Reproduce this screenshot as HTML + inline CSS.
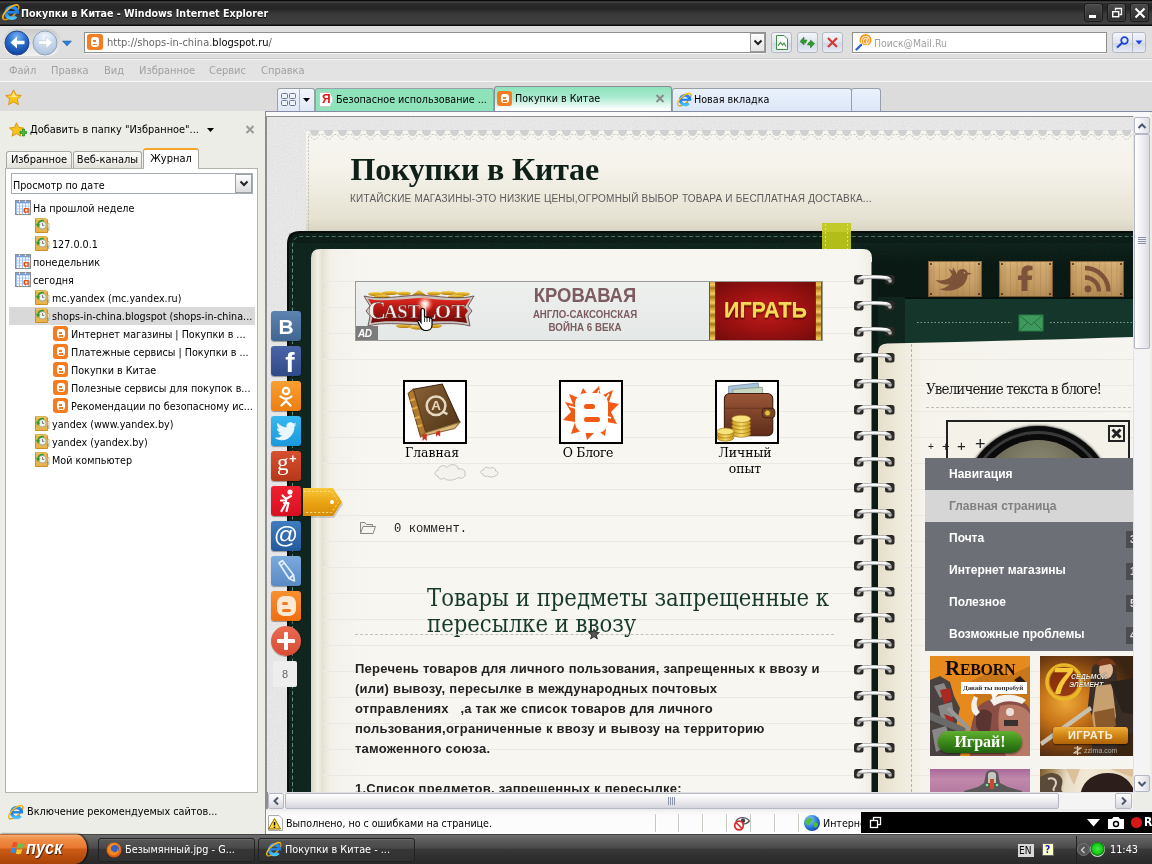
<!DOCTYPE html>
<html lang="ru">
<head>
<meta charset="utf-8">
<title>Покупки в Китае - Windows Internet Explorer</title>
<style>
html,body{margin:0;padding:0;}
body{width:1152px;height:864px;overflow:hidden;position:relative;background:#edede8;font-family:"DejaVu Sans Condensed","DejaVu Sans","Liberation Sans",sans-serif;font-size:11px;color:#000;}
.a{position:absolute;}
.t{position:absolute;white-space:nowrap;line-height:14px;}
/* ---------- window chrome ---------- */
#titlebar{left:0;top:0;width:1152px;height:26px;background:linear-gradient(#0a0a0a 0,#0a0a0a 1px,#5a5a5a 2px,#2b2b2b 3px,#262626 9px,#3a3a3a 14px,#404040 24px,#0c0c0c 25px,#0c0c0c 26px);}
#navbar{left:0;top:26px;width:1152px;height:33px;background:#dfdfdf;border-bottom:1px solid #c9c9c9;box-sizing:border-box;}
#menubar{left:0;top:59px;width:1152px;height:23px;background:#e3e3e3;border-top:1px solid #f4f4f4;border-bottom:1px solid #f6f6f6;box-sizing:border-box;}
#favbar{left:0;top:82px;width:1152px;height:29px;background:#dcdcdc;}
#sidebar{left:0;top:111px;width:265px;height:723px;background:#edede8;}
#statusbar{left:266px;top:809px;width:886px;height:25px;background:linear-gradient(#e9e9e9 0,#f6f6f6 3px,#fcfcfc 8px,#fdfdfd);}
#taskbar{left:0;top:834px;width:1152px;height:30px;background:linear-gradient(#1e1e1e 0,#6c6c6c 1px,#5e5e5e 6px,#4a4a4a 14px,#3a3a3a 15px,#2e2e2e 24px,#282828 30px);}

/* title */
#ttl{left:21px;top:6px;color:#fff;font-weight:bold;font-size:10.6px;text-shadow:0 1px 1px #000;}
.wb{top:3px;width:19px;height:19px;border-radius:3px;background:linear-gradient(#4a4a4a,#2e2e2e);border:1px solid #1a1a1a;box-sizing:border-box;box-shadow:inset 0 0 0 1px rgba(255,255,255,.07);}
/* nav */
.nbtn{border:1px solid #b4b9c2;border-radius:3px;background:linear-gradient(#f4f6fb,#dfe4ee 50%,#d0d7e6 51%,#e6eaf3);box-sizing:border-box;}
#addr{left:84px;top:32px;width:682px;height:21px;background:#fff;border:1px solid #8e8f8f;box-sizing:border-box;box-shadow:0 1px 0 #f6f6f6;}
#srch{left:852px;top:32px;width:255px;height:21px;background:#fff;border:1px solid #8e8f8f;box-sizing:border-box;box-shadow:0 1px 0 #f6f6f6;}
.menu{top:64px;color:#a2a2a2;font-size:11px;}
/* tabs */
.tab{top:88px;height:23px;box-sizing:border-box;border:1px solid #9aa0a8;border-bottom:none;border-radius:3px 3px 0 0;}

/* sidebar */
.stab{top:151px;height:18px;box-sizing:border-box;border:1px solid #a9a9a4;border-bottom:none;border-radius:3px 3px 0 0;background:linear-gradient(#fbfbf9,#eeede8 60%,#dcdbd4);text-align:center;line-height:16px;font-size:11px;white-space:nowrap;}
#spanel{left:5px;top:168px;width:253px;height:625px;background:#fff;border:1px solid #b5b5b0;box-sizing:border-box;}
.tr{position:absolute;white-space:nowrap;font-size:10.700px;line-height:18px;height:18px;margin-top:2px;}
.cal{position:absolute;width:16px;height:15px;box-sizing:border-box;border:1px solid #8a9bb8;background:
 linear-gradient(#c8d6ee,#c8d6ee) 0 0/100% 3px no-repeat,
 repeating-linear-gradient(90deg,transparent 0,transparent 3px,#b9c9e6 3px,#b9c9e6 4px),
 repeating-linear-gradient(0deg,#fff 0,#fff 3px,#b9c9e6 3px,#b9c9e6 4px);}
.cal:after{content:"";position:absolute;left:8px;top:7px;width:4px;height:4px;border:1.500px solid #e8501a;background:#fff;box-sizing:content-box;}
.hist{position:absolute;width:14px;height:15px;box-sizing:border-box;border:1px solid #c9a54a;border-radius:2px;background:linear-gradient(135deg,#f6e3a0,#e7c565);}
.hist:before{content:"";position:absolute;left:2px;top:2px;width:8px;height:8px;border-radius:50%;background:#fff;border:1px solid #7d8a7a;box-sizing:border-box;}
.hist:after{content:"";position:absolute;left:0px;top:4px;width:0;height:0;border:3px solid transparent;border-right-color:#2f9e3a;border-left:none;}
.blg{position:absolute;width:15px;height:15px;border-radius:3px;background:#f57d20;}
.blg:before{content:"";position:absolute;left:4px;top:3px;width:8px;height:9px;border-radius:3px;background:#fff;}
.blg:after{content:"";position:absolute;left:6px;top:6px;width:3px;height:1.500px;background:#f57d20;box-shadow:0 3px 0 #f57d20,1px 3px 0 #f57d20;}

/* status + taskbar */
.sdiv{top:814px;width:1px;height:18px;background:#c9c9c4;border-right:1px solid #fff;}
.tbtn{top:838px;height:24px;box-sizing:border-box;border:1px solid #222;border-radius:3px;background:linear-gradient(#585858,#484848 42%,#363636 46%,#303030);box-shadow:inset 0 1px 0 rgba(255,255,255,.1);}

/* web page */
#pg{left:-267px;top:-117px;width:1152px;height:864px;}
#pg .t{line-height:1;}
.ser{font-family:"DejaVu Serif Condensed","DejaVu Serif","Liberation Serif",serif;}
.soc{left:271px;width:30px;height:30px;border-radius:3px;box-shadow:0 1px 1px rgba(0,0,0,.35);}
.ibox{top:380px;width:64px;height:64px;box-sizing:border-box;border:2px solid #000;background:#fff;}
.nav{left:925px;width:230px;height:32px;background:#6d6f76;color:#fff;font:bold 12px/32px "Liberation Sans",sans-serif;padding-left:24px;box-sizing:border-box;white-space:nowrap;}
.badge{left:1126px;width:20px;height:17px;background:#4a4c52;color:#ddd;font:bold 11px/17px "Liberation Sans",sans-serif;padding-left:4px;box-sizing:border-box;}
.bt{font-family:"Liberation Sans",sans-serif;font-weight:bold;font-size:13px;letter-spacing:.25px;color:#222;}
.sbtn{box-sizing:border-box;border:1px solid #b4b8c4;border-radius:2px;background:linear-gradient(90deg,#fff,#f0f0f4 50%,#dcdce4);}
/* ---------- page ---------- */
#frame{left:265px;top:111px;width:887px;height:723px;background:#fafafa;border-left:1px solid #868ca4;border-top:1px solid #868ca4;box-sizing:border-box;}
#frame2{left:266px;top:116px;width:886px;height:693px;background:#8e8e8e;}
#view{left:267px;top:117px;width:866px;height:675px;overflow:hidden;background:#e4e4e4;}
</style>
</head>
<body>
<div id="root" style="position:absolute;left:0;top:0;width:1152px;height:864px;will-change:transform">

<svg width="0" height="0" style="position:absolute"><defs><linearGradient id="ieg" x1="0" y1="0" x2="0" y2="1"><stop offset="0" stop-color="#2a8cf0"/><stop offset=".5" stop-color="#1a78e0"/><stop offset="1" stop-color="#4cc4ff"/></linearGradient><symbol id="cal" viewBox="0 0 16 15"><rect x=".5" y=".5" width="15" height="14" fill="#9cc2f2" stroke="#8e8e8e"/><rect x="1" y="1" width="14" height="2" fill="#7f9fd0"/><path d="M4.500 .5V2M10.500 .5V2" stroke="#fff" stroke-width="1"/><g fill="#fff"><rect x="2" y="3.600" width="2" height="2"/><rect x="5" y="3.600" width="2" height="2"/><rect x="8" y="3.600" width="2" height="2"/><rect x="11" y="3.600" width="2" height="2"/><rect x="2" y="6.500" width="2" height="2"/><rect x="5" y="6.500" width="2" height="2"/><rect x="8" y="6.500" width="2" height="2"/><rect x="11" y="6.500" width="2" height="2"/><rect x="2" y="9.400" width="2" height="2"/><rect x="5" y="9.400" width="2" height="2"/><rect x="2" y="12.200" width="2" height="1.800"/><rect x="5" y="12.200" width="2" height="1.800"/><rect x="8" y="12.200" width="2" height="1.800"/><rect x="11" y="12.200" width="2" height="1.800"/><rect x="13.600" y="3.600" width="1.400" height="2"/><rect x="13.600" y="6.500" width="1.400" height="2"/></g><rect x="9.600" y="8.700" width="3.400" height="3.400" fill="#fff" stroke="#f04a00" stroke-width="1.300"/></symbol>
<symbol id="hist" viewBox="0 0 15 16"><path d="M.5 1.500H11L12.500 3V15.500H.5Z" fill="#e6b44a" stroke="#c8902a" stroke-width="1"/><path d="M12.500 6.500H14V13.500H12.500Z" fill="#fff" stroke="#c8902a" stroke-width=".6"/><path d="M12.900 10.500V13" stroke="#2a8ae8" stroke-width=".9"/><path d="M1 2H11" stroke="#f6d888" stroke-width="1"/><circle cx="7.400" cy="8.200" r="3.700" fill="#f4f4f4" stroke="#9aa09a" stroke-width=".8"/><path d="M7.400 6V8.400H9.300" fill="none" stroke="#555" stroke-width=".8"/><path d="M3 9C2.300 5.500 5.500 2.800 8.800 3.600" fill="none" stroke="#2e9e2e" stroke-width="1.600"/><path d="M.8 6.800L5.400 7.400L3 10.800Z" fill="#2e9e2e"/></symbol>
<symbol id="ie" viewBox="0 0 20 20"><g transform="translate(9.800,10.200) rotate(-42)"><path d="M-10 0A10 4.200 0 0 0 10 0" fill="none" stroke="#d89a10" stroke-width="1.500"/></g><path d="M16.300 10.300A5.600 5.600 0 1 0 15 14.300" fill="none" stroke="url(#ieg)" stroke-width="3.600"/><path d="M6.500 10.300H17.800" stroke="#1f84ea" stroke-width="2.600"/><g transform="translate(9.800,10.200) rotate(-42)"><path d="M-10 0A10 4.200 0 0 1 10 0" fill="none" stroke="#f4b81c" stroke-width="1.700"/></g></symbol></defs></svg>
<div class="a" id="titlebar"></div>
<svg class="a" style="left:1px;top:2px" width="20" height="20"><use href="#ie"/></svg>
<div class="t" id="ttl">Покупки в Китае - Windows Internet Explorer</div>
<div class="a wb" style="left:1084px"><div class="a" style="left:4px;top:11px;width:7px;height:3px;background:#fff"></div></div>
<div class="a wb" style="left:1107px"><svg class="a" style="left:3px;top:3px" width="12" height="12"><path d="M4.5 3.5V1.5H10.5V7.5H8.5" fill="none" stroke="#fff" stroke-width="1.3"/><rect x="1.7" y="4.7" width="6" height="5" fill="none" stroke="#fff" stroke-width="1.4"/></svg></div>
<div class="a wb" style="left:1130px"><svg class="a" style="left:3px;top:3px" width="12" height="12"><path d="M1.5 1.5L10.5 10.5M10.5 1.5L1.5 10.5" stroke="#fff" stroke-width="2"/></svg></div>

<div class="a" id="navbar"></div>
<div class="a" style="left:3px;top:29px;width:58px;height:27px;border-radius:14px;background:linear-gradient(#c8c8c8,#f4f4f4);opacity:.9"></div>
<svg class="a" style="left:4px;top:30px" width="70" height="26" viewBox="0 0 70 26">
<defs><radialGradient id="gb" cx=".5" cy=".25" r=".8"><stop offset="0" stop-color="#7fb6f2"/><stop offset=".45" stop-color="#2a6ed0"/><stop offset="1" stop-color="#0d3c93"/></radialGradient>
<radialGradient id="gf" cx=".5" cy=".25" r=".8"><stop offset="0" stop-color="#f4f8fd"/><stop offset=".5" stop-color="#c9d8ec"/><stop offset="1" stop-color="#a9bdd8"/></radialGradient></defs>
<circle cx="13" cy="13" r="12" fill="url(#gb)" stroke="#27488a" stroke-width="1"/>
<path d="M6.500 12.500L13 6.500V10.700H20.500V14.300H13V18.500Z" fill="#fff"/>
<circle cx="41" cy="13" r="12" fill="url(#gf)" stroke="#8fa3c0" stroke-width="1"/>
<path d="M48.500 12.500L42 6.500V10.700H34.500V14.300H42V18.500Z" fill="#fff" stroke="#b8c8de" stroke-width=".6"/>
<path d="M58.5 11H67.5L63 16Z" fill="#2c7fd6" stroke="#1a5aa8" stroke-width=".5"/>
</svg>
<div class="a" id="addr"></div>
<div class="a" style="left:87px;top:34px;width:16px;height:16px;border-radius:3px;background:#f57d20"></div>
<div class="a" style="left:91px;top:37px;width:8px;height:10px;border-radius:3px;background:#fff"></div>
<div class="a" style="left:93px;top:40px;width:3px;height:1.5px;background:#f57d20"></div>
<div class="a" style="left:93px;top:43.5px;width:4px;height:1.5px;background:#f57d20"></div>
<div class="t" style="left:107px;top:36px;font-size:11px;color:#666">http://shops-in-china.<span style="color:#000">blogspot.ru</span>/</div>
<div class="a" style="left:750px;top:33px;width:15px;height:19px;background:linear-gradient(#fdfdfd,#e4e4e4);border:1px solid #9b9b9b;box-sizing:border-box"></div>
<svg class="a" style="left:753px;top:39px" width="10" height="8"><path d="M1.5 1.5L5 5L8.5 1.5" fill="none" stroke="#222" stroke-width="2"/></svg>
<div class="a nbtn" style="left:771px;top:32px;width:21px;height:21px"></div>
<svg class="a" style="left:775px;top:35px" width="14" height="15"><path d="M1.5 .5H9L12.5 4V14.5H1.5Z" fill="#fff" stroke="#3d9140" stroke-width="1"/><path d="M3 11L5.5 7.5L7.5 10L9 8L11 11.5" fill="none" stroke="#3d9140" stroke-width="1.2"/></svg>
<div class="a nbtn" style="left:797px;top:32px;width:21px;height:21px"></div>
<svg class="a" style="left:799px;top:35px" width="17" height="15"><path d="M1 6.5L5 2V5H8L6.5 8H5V10Z M15.5 8.5L11.5 13V10H8.500L10 7H11.500V5Z" fill="#2e9b2e" stroke="#1c6f1c" stroke-width=".5"/></svg>
<div class="a nbtn" style="left:822px;top:32px;width:21px;height:21px"></div>
<svg class="a" style="left:826px;top:36px" width="13" height="13"><path d="M2 2L11 11M11 2L2 11" stroke="#d23a34" stroke-width="2.2"/></svg>
<div class="a" id="srch"></div>
<svg class="a" style="left:855px;top:33px" width="18" height="18"><circle cx="10.500" cy="7" r="6" fill="#f79a1e"/><text x="5.500" y="10.500" font-family="Liberation Sans, sans-serif" font-weight="bold" font-size="10" fill="#fff">@</text><path d="M1.5 16.5L6 12" stroke="#2a64c8" stroke-width="2.4" stroke-linecap="round"/></svg>
<div class="t" style="left:874px;top:36px;font-size:10.4px;color:#a0a0a0">Поиск@Mail.Ru</div>
<div class="a nbtn" style="left:1112px;top:32px;width:34px;height:21px"></div>
<div class="a" style="left:1132px;top:33px;width:1px;height:19px;background:#b4b9c2"></div>
<svg class="a" style="left:1114px;top:35px" width="17" height="15"><circle cx="10.500" cy="5.500" r="3.300" fill="none" stroke="#1c44d8" stroke-width="1.700"/><path d="M8 8L3 12.500" stroke="#1c44d8" stroke-width="2.200"/></svg>
<svg class="a" style="left:1135px;top:40px" width="8" height="5"><path d="M.5 .5H7.5L4 4.500Z" fill="#1c44d8"/></svg>

<div class="a" id="menubar"></div>
<div class="t menu" style="left:9px">Файл</div>
<div class="t menu" style="left:51px">Правка</div>
<div class="t menu" style="left:104px">Вид</div>
<div class="t menu" style="left:139px">Избранное</div>
<div class="t menu" style="left:209px">Сервис</div>
<div class="t menu" style="left:261px">Справка</div>

<div class="a" id="favbar"></div>
<svg class="a" style="left:5px;top:89px" width="17" height="17" viewBox="0 0 17 17"><path d="M8.500 .8L10.900 5.900L16.300 6.500L12.300 10.200L13.400 15.700L8.500 12.900L3.600 15.700L4.700 10.200L.7 6.500L6.100 5.900Z" fill="#f9c31c" stroke="#d89208" stroke-width=".9"/><path d="M8.500 3L10 6.800L13.500 7.300L8.500 8.500L4 7.200L7 6.800Z" fill="#fde98a"/></svg>


<div class="a tab" style="left:277px;width:38px;background:linear-gradient(#f2f6fc,#dfe8f6)"></div>
<div class="a" style="left:299px;top:89px;width:1px;height:22px;background:#aab2bf"></div>
<svg class="a" style="left:280px;top:92px" width="17" height="15"><g fill="#eef2fa" stroke="#6c7890" stroke-width="1"><rect x="1.500" y="1.500" width="6" height="5" rx="1"/><rect x="9.500" y="1.500" width="6" height="5" rx="1"/><rect x="1.500" y="8.500" width="6" height="5" rx="1"/><rect x="9.500" y="8.500" width="6" height="5" rx="1"/></g></svg>
<svg class="a" style="left:303px;top:98px" width="7" height="4"><path d="M0 0H7L3.500 4Z" fill="#000"/></svg>
<div class="a tab" style="left:315px;width:179px;background:#8fe3bb"></div>
<div class="a" style="left:319px;top:92px;width:14px;height:15px;background:#fff;border:1px solid #c8c8c8;box-sizing:border-box;clip-path:polygon(0 0,75% 0,100% 50%,75% 100%,0 100%)"></div>
<div class="t" style="left:322px;top:92px;font:bold 12px/15px 'Liberation Sans',sans-serif;color:#e01818">Я</div>
<div class="t" style="left:336px;top:93px;font-size:10.700px">Безопасное использование ...</div>
<div class="a tab" style="left:494px;top:86px;width:178px;height:26px;background:linear-gradient(#8fe3bb 0,#a8ead0 40%,#fff 90%);border-color:#8a9098"></div>
<div class="blg" style="left:497px;top:91px"></div>
<div class="t" style="left:515px;top:92px;font-size:10.700px">Покупки в Китае</div>
<svg class="a" style="left:655px;top:94px" width="10" height="9"><path d="M1.500 1L8.500 8M8.500 1L1.500 8" stroke="#8a8a8a" stroke-width="2"/></svg>
<div class="a tab" style="left:672px;width:180px;background:linear-gradient(#eaf1fc,#dce7f7)"></div>
<svg class="a" style="left:676px;top:91px" width="17" height="17"><use href="#ie"/></svg>
<div class="t" style="left:694px;top:93px;font-size:10.700px">Новая вкладка</div>
<div class="a tab" style="left:851px;width:30px;background:linear-gradient(#eaf1fc,#dce7f7)"></div>
<div class="a" id="sidebar"></div>
<svg class="a" style="left:9px;top:122px" width="18" height="17" viewBox="0 0 18 17"><path d="M7.500 .8L9.600 5.400L14.500 6L10.900 9.300L11.900 14.200L7.500 11.700L3.100 14.200L4.100 9.300L.5 6L5.400 5.400Z" fill="#f9c31c" stroke="#d89208" stroke-width=".9"/><path d="M11 9.500H13.500V7H15.500V9.500H17.700V11.500H15.500V14H13.500V11.500H11Z" fill="#3cc23c" stroke="#1d8a1d" stroke-width=".7"/></svg>
<div class="t" style="left:30px;top:123px;font-size:10.900px">Добавить в папку "Избранное"...</div>
<svg class="a" style="left:207px;top:128px" width="7" height="4"><path d="M0 0H7L3.500 4Z" fill="#000"/></svg>
<svg class="a" style="left:245px;top:125px" width="10" height="9"><path d="M1.500 1L8.500 8M8.500 1L1.500 8" stroke="#9a9a9a" stroke-width="2"/></svg>
<div class="a stab" style="left:6px;width:66px">Избранное</div>
<div class="a stab" style="left:73px;width:69px">Веб-каналы</div>
<div class="a" id="spanel"></div>
<div class="a stab" style="left:143px;top:148px;width:56px;height:21px;background:#fff;border-top:2px solid #f4a62a;line-height:17px">Журнал</div>
<div class="a" style="left:11px;top:173px;width:242px;height:21px;border:1px solid #a5acb2;background:#fff;box-sizing:border-box"></div>
<div class="t" style="left:13px;top:179px;font-size:10.700px">Просмотр по дате</div>
<div class="a" style="left:235px;top:174px;width:17px;height:19px;background:linear-gradient(#fcfcfc,#dcdcdc);border:1px solid #a0a0a0;box-sizing:border-box"></div>
<svg class="a" style="left:238.500px;top:180px" width="10" height="8"><path d="M1.500 1.500L5 5L8.500 1.500" fill="none" stroke="#222" stroke-width="2"/></svg>
<svg class="a" style="left:15px;top:200px" width="16" height="15"><use href="#cal"/></svg><div class="tr" style="left:33px;top:198px">На прошлой неделе</div>
<svg class="a" style="left:35px;top:217px" width="15" height="16"><use href="#hist"/></svg>
<svg class="a" style="left:35px;top:235px" width="15" height="16"><use href="#hist"/></svg><div class="tr" style="left:52px;top:234px">127.0.0.1</div>
<svg class="a" style="left:15px;top:254px" width="16" height="15"><use href="#cal"/></svg><div class="tr" style="left:33px;top:252px">понедельник</div>
<svg class="a" style="left:15px;top:272px" width="16" height="15"><use href="#cal"/></svg><div class="tr" style="left:33px;top:270px">сегодня</div>
<svg class="a" style="left:35px;top:289px" width="15" height="16"><use href="#hist"/></svg><div class="tr" style="left:52px;top:288px">mc.yandex (mc.yandex.ru)</div>
<div class="a" style="left:9px;top:307px;width:246px;height:18px;background:#d9d9d9"></div>
<svg class="a" style="left:35px;top:307px" width="15" height="16"><use href="#hist"/></svg><div class="tr" style="left:52px;top:306px">shops-in-china.blogspot (shops-in-china...</div>
<div class="blg" style="left:53px;top:326px"></div><div class="tr" style="left:71px;top:324px">Интернет магазины | Покупки в ...</div>
<div class="blg" style="left:53px;top:344px"></div><div class="tr" style="left:71px;top:342px">Платежные сервисы | Покупки в ...</div>
<div class="blg" style="left:53px;top:362px"></div><div class="tr" style="left:71px;top:360px">Покупки в Китае</div>
<div class="blg" style="left:53px;top:380px"></div><div class="tr" style="left:71px;top:378px">Полезные сервисы для покупок в...</div>
<div class="blg" style="left:53px;top:398px"></div><div class="tr" style="left:71px;top:396px">Рекомендации по безопасному ис...</div>
<svg class="a" style="left:35px;top:415px" width="15" height="16"><use href="#hist"/></svg><div class="tr" style="left:52px;top:414px">yandex (www.yandex.by)</div>
<svg class="a" style="left:35px;top:433px" width="15" height="16"><use href="#hist"/></svg><div class="tr" style="left:52px;top:432px">yandex (yandex.by)</div>
<svg class="a" style="left:35px;top:451px" width="15" height="16"><use href="#hist"/></svg><div class="tr" style="left:52px;top:450px">Мой компьютер</div>

<svg class="a" style="left:7px;top:803px" width="18" height="18"><use href="#ie"/></svg>
<div class="t" style="left:27px;top:805px;font-size:10.800px">Включение рекомендуемых сайтов...</div>
<div class="a" id="frame"></div><div class="a" id="frame2"></div>

<div class="a" id="view"><div class="a" id="pg">
<svg class="a" style="left:0;top:0" width="1152" height="864" viewBox="0 0 1152 864">
<defs>
<filter id="noise" x="0" y="0" width="100%" height="100%"><feTurbulence type="fractalNoise" baseFrequency=".9" numOctaves="2" seed="3" result="n"/><feColorMatrix type="matrix" values="0 0 0 0 0  0 0 0 0 0  0 0 0 0 0  .6 .6 .6 0 -.55"/></filter>
<linearGradient id="hp" x1="0" y1="0" x2="0" y2="1"><stop offset="0" stop-color="#f6f5f0"/><stop offset=".35" stop-color="#f4f2ea"/><stop offset=".8" stop-color="#e6e2d2"/><stop offset="1" stop-color="#cfcab8"/></linearGradient>
<linearGradient id="pgl" x1="0" y1="0" x2="1" y2="0"><stop offset="0" stop-color="#d8d4c4"/><stop offset=".012" stop-color="#f3f1e8"/><stop offset=".02" stop-color="#e4e0d2"/><stop offset=".035" stop-color="#f3f1ea"/><stop offset=".1" stop-color="#f7f6f1"/><stop offset=".975" stop-color="#f7f6f1"/><stop offset="1" stop-color="#efede4"/></linearGradient>
<linearGradient id="pgr" x1="0" y1="0" x2="1" y2="0"><stop offset="0" stop-color="#e6dfcc"/><stop offset=".08" stop-color="#efeadb"/><stop offset=".16" stop-color="#f5f3ec"/><stop offset="1" stop-color="#f6f5f0"/></linearGradient>
<linearGradient id="rg" x1="0" y1="0" x2="0" y2="1"><stop offset="0" stop-color="#fff"/><stop offset=".4" stop-color="#d8d8d8"/><stop offset=".75" stop-color="#8a8a8a"/><stop offset="1" stop-color="#bdbdbd"/></linearGradient>
<linearGradient id="woodv" x1="0" y1="0" x2="0" y2="1"><stop offset="0" stop-color="#e8c890" stop-opacity=".5"/><stop offset=".3" stop-color="#d8b078" stop-opacity=".15"/><stop offset="1" stop-color="#8a6030" stop-opacity=".35"/></linearGradient><linearGradient id="wood" x1="0" y1="0" x2="1" y2="0"><stop offset="0" stop-color="#b08850"/><stop offset=".12" stop-color="#cca46a"/><stop offset=".5" stop-color="#c49c62"/><stop offset=".88" stop-color="#cca46c"/><stop offset="1" stop-color="#aa804a"/></linearGradient>
<g id="ring"><rect x="854" y="275" width="9.500" height="9.500" rx="2.500" fill="#2c2a26"/><rect x="885" y="275" width="9.500" height="9.500" rx="2.500" fill="#2c2a26"/><path d="M858.500 281C859 277.500 864 277 874 277C884 277 889.500 277.500 890 281" fill="none" stroke="#8a8a8a" stroke-width="4" stroke-linecap="round"/><path d="M858.500 280.600C859 277.300 864 276.800 874 276.800C884 276.800 889.500 277.300 890 280.600" fill="none" stroke="url(#rg)" stroke-width="2.800" stroke-linecap="round"/><path d="M862 277.800C866 276.300 882 276.300 886 277.800" fill="none" stroke="#fff" stroke-width=".9" opacity=".85"/></g>
</defs>
<rect x="266" y="112" width="886" height="700" fill="#ececec"/>
<rect x="266" y="112" width="886" height="700" filter="url(#noise)" opacity=".07"/>
<!-- header paper -->
<filter id="blr" x="-5%" y="-20%" width="110%" height="140%"><feGaussianBlur stdDeviation="2"/></filter><rect x="306" y="130" width="860" height="7" fill="#d0d0d0"/>
<path d="M306 240V130.500H310a4.500 5.500 0 0 0 9 0h5a4.500 5.500 0 0 0 9 0h5a4.500 5.500 0 0 0 9 0h5a4.500 5.500 0 0 0 9 0h5a4.500 5.500 0 0 0 9 0h5a4.500 5.500 0 0 0 9 0h5a4.500 5.500 0 0 0 9 0h5a4.500 5.500 0 0 0 9 0h5a4.500 5.500 0 0 0 9 0h5a4.500 5.500 0 0 0 9 0h5a4.500 5.500 0 0 0 9 0h5a4.500 5.500 0 0 0 9 0h5a4.500 5.500 0 0 0 9 0h5a4.500 5.500 0 0 0 9 0h5a4.500 5.500 0 0 0 9 0h5a4.500 5.500 0 0 0 9 0h5a4.500 5.500 0 0 0 9 0h5a4.500 5.500 0 0 0 9 0h5a4.500 5.500 0 0 0 9 0h5a4.500 5.500 0 0 0 9 0h5a4.500 5.500 0 0 0 9 0h5a4.500 5.500 0 0 0 9 0h5a4.500 5.500 0 0 0 9 0h5a4.500 5.500 0 0 0 9 0h5a4.500 5.500 0 0 0 9 0h5a4.500 5.500 0 0 0 9 0h5a4.500 5.500 0 0 0 9 0h5a4.500 5.500 0 0 0 9 0h5a4.500 5.500 0 0 0 9 0h5a4.500 5.500 0 0 0 9 0h5a4.500 5.500 0 0 0 9 0h5a4.500 5.500 0 0 0 9 0h5a4.500 5.500 0 0 0 9 0h5a4.500 5.500 0 0 0 9 0h5a4.500 5.500 0 0 0 9 0h5a4.500 5.500 0 0 0 9 0h5a4.500 5.500 0 0 0 9 0h5a4.500 5.500 0 0 0 9 0h5a4.500 5.500 0 0 0 9 0h5a4.500 5.500 0 0 0 9 0h5a4.500 5.500 0 0 0 9 0h5a4.500 5.500 0 0 0 9 0h5a4.500 5.500 0 0 0 9 0h5a4.500 5.500 0 0 0 9 0h5a4.500 5.500 0 0 0 9 0h5a4.500 5.500 0 0 0 9 0h5a4.500 5.500 0 0 0 9 0h5a4.500 5.500 0 0 0 9 0h5a4.500 5.500 0 0 0 9 0h5a4.500 5.500 0 0 0 9 0h5a4.500 5.500 0 0 0 9 0h5a4.500 5.500 0 0 0 9 0h5a4.500 5.500 0 0 0 9 0h5a4.500 5.500 0 0 0 9 0h5a4.500 5.500 0 0 0 9 0h5a4.500 5.500 0 0 0 9 0h5a4.500 5.500 0 0 0 9 0h5a4.500 5.500 0 0 0 9 0h5a4.500 5.500 0 0 0 9 0h5a4.500 5.500 0 0 0 9 0h5a4.500 5.500 0 0 0 9 0h5V240Z" fill="url(#hp)"/>
<path d="M308.500 236V134.500H309.500q5 10 10 0h4q5 10 10 0h4q5 10 10 0h4q5 10 10 0h4q5 10 10 0h4q5 10 10 0h4q5 10 10 0h4q5 10 10 0h4q5 10 10 0h4q5 10 10 0h4q5 10 10 0h4q5 10 10 0h4q5 10 10 0h4q5 10 10 0h4q5 10 10 0h4q5 10 10 0h4q5 10 10 0h4q5 10 10 0h4q5 10 10 0h4q5 10 10 0h4q5 10 10 0h4q5 10 10 0h4q5 10 10 0h4q5 10 10 0h4q5 10 10 0h4q5 10 10 0h4q5 10 10 0h4q5 10 10 0h4q5 10 10 0h4q5 10 10 0h4q5 10 10 0h4q5 10 10 0h4q5 10 10 0h4q5 10 10 0h4q5 10 10 0h4q5 10 10 0h4q5 10 10 0h4q5 10 10 0h4q5 10 10 0h4q5 10 10 0h4q5 10 10 0h4q5 10 10 0h4q5 10 10 0h4q5 10 10 0h4q5 10 10 0h4q5 10 10 0h4q5 10 10 0h4q5 10 10 0h4q5 10 10 0h4q5 10 10 0h4q5 10 10 0h4q5 10 10 0h4q5 10 10 0h4q5 10 10 0h4q5 10 10 0h4q5 10 10 0h4q5 10 10 0h4q5 10 10 0h4q5 10 10 0h4q5 10 10 0h4q5 10 10 0h4" fill="none" stroke="#b0b0aa" stroke-width="1" stroke-dasharray="2 1.500" opacity=".7"/>
<!-- cover -->
<path d="M287 812V244Q287 231 300 231H1160V812Z" fill="#0a0f0d"/>
<path d="M289 812V245Q289 233 301 233H1160V812Z" fill="#122b22"/>
<path d="M289 812V245Q289 233 301 233H1160V812Z" filter="url(#noise)" opacity=".35"/>
<path d="M292.500 812V246Q292.500 236.500 302 236.500H1160" fill="none" stroke="#5d8a78" stroke-width="1" stroke-dasharray="4 2.500"/>
<rect x="289" y="233" width="871" height="10" fill="#000" opacity=".18"/>
<linearGradient id="dk" x1="0" y1="0" x2="0" y2="1"><stop offset="0" stop-color="#000" stop-opacity="0"/><stop offset=".45" stop-color="#000" stop-opacity=".34"/><stop offset="1" stop-color="#000" stop-opacity=".34"/></linearGradient><rect x="860" y="238" width="310" height="59" fill="url(#dk)"/>
<!-- bookmark -->
<rect x="822" y="223" width="29" height="28" fill="#b3bd1a"/><rect x="822" y="223" width="29" height="9" fill="#c8d030" opacity=".7"/>
<path d="M825.500 224V250M847.500 224V250" stroke="#dfe56a" stroke-width="1" stroke-dasharray="2 2"/>
<!-- pocket on cover right -->
<rect x="905" y="298" width="260" height="50" fill="#1a4536" opacity=".55"/>
<rect x="905" y="297" width="260" height="2" fill="#06100c"/>
<path d="M917 322.500H1012M1050 322.500H1160" stroke="#7da595" stroke-width="1" stroke-dasharray="1.500 2"/>
<!-- left page -->
<path d="M311 812V258Q311 249 320 249H863Q872 249 872 258V812Z" fill="url(#pgl)"/>
<g stroke="#ebe9e2" stroke-width="1.2"><path d="M322 281.5H870"/><path d="M322 307.5H870"/><path d="M322 333.5H870"/><path d="M322 359.5H870"/><path d="M322 385.5H870"/><path d="M322 411.5H870"/><path d="M322 437.5H870"/><path d="M322 463.5H870"/><path d="M322 489.5H870"/><path d="M322 515.5H870"/><path d="M322 541.5H870"/><path d="M322 567.5H870"/><path d="M322 593.5H870"/><path d="M322 619.5H870"/><path d="M322 645.5H870"/><path d="M322 671.5H870"/><path d="M322 697.5H870"/><path d="M322 723.5H870"/><path d="M322 749.5H870"/><path d="M322 775.5H870"/><path d="M322 801.5H870"/></g>
<!-- binding strip -->
<rect x="871.500" y="262" width="6.500" height="550" fill="#0b1a15"/>
<!-- right page -->
<path d="M878 812V352Q878 344 887 343.500Q1010 341 1160 336V812Z" fill="url(#pgr)"/>
<g stroke="#ebe9e2" stroke-width="1.2"><path d="M884 359.5H1160"/><path d="M884 385.5H1160"/><path d="M884 411.5H1160"/><path d="M884 437.5H1160"/><path d="M884 463.5H1160"/><path d="M884 489.5H1160"/><path d="M884 515.5H1160"/><path d="M884 541.5H1160"/><path d="M884 567.5H1160"/><path d="M884 593.5H1160"/><path d="M884 619.5H1160"/><path d="M884 645.5H1160"/><path d="M884 671.5H1160"/><path d="M884 697.5H1160"/><path d="M884 723.5H1160"/><path d="M884 749.5H1160"/><path d="M884 775.5H1160"/><path d="M884 801.5H1160"/></g>
<path d="M911.500 344V812" stroke="#f09a94" stroke-width="1" stroke-dasharray="3 2"/>
<use href="#ring" y="0"/><use href="#ring" y="26"/><use href="#ring" y="52"/><use href="#ring" y="78"/><use href="#ring" y="104"/><use href="#ring" y="130"/><use href="#ring" y="156"/><use href="#ring" y="182"/><use href="#ring" y="208"/><use href="#ring" y="234"/><use href="#ring" y="260"/><use href="#ring" y="286"/><use href="#ring" y="312"/><use href="#ring" y="338"/><use href="#ring" y="364"/><use href="#ring" y="390"/><use href="#ring" y="416"/><use href="#ring" y="442"/><use href="#ring" y="468"/><use href="#ring" y="494"/>
<!-- wood icons -->
<g id="woods">
<g id="wd1"><rect x="928" y="261" width="54" height="36" fill="url(#wood)"/><rect x="928" y="261" width="54" height="36" fill="url(#woodv)"/><path d="M928.500 261.500H981.500V296.500H928.500Z" fill="none" stroke="#6a4a28" stroke-width="1" opacity=".7"/><g stroke="#a07844" stroke-width=".6" opacity=".55"><path d="M934 262V296M939.500 262V296M946 262V296M951 262V296M957.500 262V296M963 262V296M969.500 262V296M975 262V296"/></g><circle cx="931" cy="264" r="1" fill="#3a2a18"/><circle cx="979" cy="264" r="1" fill="#3a2a18"/><circle cx="931" cy="294" r="1" fill="#3a2a18"/><circle cx="979" cy="294" r="1" fill="#3a2a18"/></g>
<use href="#wd1" x="71"/><use href="#wd1" x="142"/>
<path d="M935.500 280C940 284 946 285.500 950 284C947 287 943 289 939 289C946 292 956 291 962 286C966 282.500 967.500 278 967.500 275L972 273.500L967.500 272.500C966.500 269.500 963 268 960 269.500C958 270.500 957 272 957 274L953 267.500L952.500 271L948.500 268.500L952 274.500C950.500 279 943 281.500 935.500 280Z" fill="#7c5238"/><circle cx="964.500" cy="272.800" r=".9" fill="#c8a068"/>
<path d="M1021.500 291V280H1018V275.500H1021.500V272.500C1021.500 268 1024 265.500 1028.500 265.500C1030 265.500 1031.500 265.700 1032.500 266V270.200H1030.300C1028.300 270.200 1027.500 271 1027.500 272.800V275.500H1032.300L1031.600 280H1027.500V291Z" fill="#7c5238"/>
<g fill="none" stroke="#7c5238" stroke-width="4.300"><path d="M1085 277.500A14 14 0 0 1 1099 291.500"/><path d="M1085 268A23.500 23.500 0 0 1 1108.500 291.500"/></g><circle cx="1088" cy="289" r="3.400" fill="#7c5238"/>
</g>
<!-- envelope -->
<rect x="1019" y="315" width="24" height="16" fill="#3d9a5c" stroke="#2a7a44" stroke-width="1"/><path d="M1019 315L1031 325L1043 315M1019 331L1028 322M1043 331L1034 322" fill="none" stroke="#2a6e40" stroke-width="1"/>
</svg>
<!-- header text -->
<div class="t" style="left:350.500px;top:151.300px;font:bold 32px/36px 'Liberation Serif',serif;color:#0f2019;letter-spacing:-.2px">Покупки в Китае</div>
<div class="t" style="left:350px;top:193px;font:10px/12px 'Liberation Sans',sans-serif;color:#5a5a5a;letter-spacing:.21px">КИТАЙСКИЕ МАГАЗИНЫ-ЭТО НИЗКИЕ ЦЕНЫ,ОГРОМНЫЙ ВЫБОР ТОВАРА И БЕСПЛАТНАЯ ДОСТАВКА...</div>

<!-- banner -->
<div class="a" style="left:355px;top:281px;width:468px;height:60px;box-sizing:border-box;border:1px solid #9a9a9a;background:linear-gradient(#eef0ee,#e4e8e6)"></div>
<svg class="a" style="left:360px;top:286px" width="118" height="50" viewBox="0 0 118 50">
<defs><linearGradient id="cl" x1="0" y1="0" x2="0" y2="1"><stop offset="0" stop-color="#e02a20"/><stop offset=".45" stop-color="#b01410"/><stop offset="1" stop-color="#6a0a08"/></linearGradient><radialGradient id="glow"><stop offset="0" stop-color="#fff"/><stop offset=".35" stop-color="#ffd0c0" stop-opacity=".9"/><stop offset="1" stop-color="#ff4030" stop-opacity="0"/></radialGradient><linearGradient id="gld" x1="0" y1="0" x2="0" y2="1"><stop offset="0" stop-color="#f8d848"/><stop offset="1" stop-color="#b87a10"/></linearGradient></defs>
<g fill="url(#gld)"><ellipse cx="16" cy="8" rx="8" ry="2"/><ellipse cx="30" cy="7" rx="8" ry="2"/><ellipse cx="44" cy="7.500" rx="7" ry="2"/><ellipse cx="74" cy="7.500" rx="7" ry="2"/><ellipse cx="88" cy="7" rx="8" ry="2"/><ellipse cx="102" cy="8" rx="8" ry="2"/><ellipse cx="22" cy="10.500" rx="8" ry="1.800"/><ellipse cx="96" cy="10.500" rx="8" ry="1.800"/><path d="M52 9L59 4L66 9Z"/><ellipse cx="44" cy="40" rx="8" ry="2"/><ellipse cx="59" cy="41.500" rx="9" ry="2.200"/><ellipse cx="74" cy="40" rx="8" ry="2"/></g>
<path d="M4 10C20 14 40 10 59 9C78 10 98 14 114 10L108 20L112 25L108 30L110 40C96 36 78 38 59 39C40 38 22 36 8 40L10 30L6 25L10 20Z" fill="#c8c4c0" stroke="#5a3a38" stroke-width=".8"/>
<path d="M8 13C22 16 40 13 59 12C78 13 96 16 110 13L105 21L108 25L105 29L107 37C94 34 78 35.500 59 36C40 35.500 24 34 11 37L13 29L10 25L13 21Z" fill="url(#cl)"/>
<g font-family="Liberation Serif, serif" font-weight="bold" fill="#f0ecea" stroke="#5a1a16" stroke-width=".4"><text x="8" y="33" font-size="25">C</text><text x="24" y="31.500" font-size="18" textLength="36" lengthAdjust="spacingAndGlyphs">AST</text><text x="60" y="33" font-size="25">L</text><text x="75" y="31.500" font-size="18" textLength="30" lengthAdjust="spacingAndGlyphs">OT</text></g>
<circle cx="65" cy="18" r="9" fill="url(#glow)"/>
</svg>
<svg class="a" style="left:417px;top:307px" width="18" height="26" viewBox="0 0 18 26"><path d="M5.500 1.500C7 1.500 7.500 2.500 7.500 3.500V10.500C8 9.500 9.500 9.500 10 10.800C10.800 9.800 12.300 10 12.600 11.300C13.500 10.600 15 11 15 12.500V18C15 21 13 23.500 10 23.500H8C6 23.500 4.500 22 3.500 20L1 15C.5 13.800 2 12.800 3 14L4 15.500V3.500C4 2.500 4.500 1.500 5.500 1.500Z" fill="#fff" stroke="#000" stroke-width="1.200"/><path d="M7.500 11V15M10 11.500V15M12.600 12V15" stroke="#000" stroke-width=".8"/></svg>
<div class="a" style="left:356px;top:326px;width:22px;height:14px;background:#7b7b7b"></div>
<div class="t" style="left:358px;top:328px;font:italic bold 10px/11px 'Liberation Sans',sans-serif;color:#fff;letter-spacing:-.5px">AD</div>
<div class="t" style="left:485px;top:285px;width:200px;text-align:center;font:bold 20.500px/20px 'Liberation Sans',sans-serif;color:#7c5c60;transform:scaleX(.9)">КРОВАВАЯ</div>
<div class="t" style="left:485px;top:308px;width:200px;text-align:center;font:bold 11.500px/12px 'Liberation Sans',sans-serif;color:#7c5c60;transform:scaleX(.84)">АНГЛО-САКСОНСКАЯ</div>
<div class="t" style="left:485px;top:321px;width:200px;text-align:center;font:bold 11.500px/12px 'Liberation Sans',sans-serif;color:#7c5c60;transform:scaleX(.85)">ВОЙНА 6 ВЕКА</div>
<div class="a" style="left:709px;top:282px;width:113px;height:58px;background:radial-gradient(ellipse at 50% 50%,#c41c1c 0,#a01212 45%,#6e0a0a 100%)"></div>
<div class="a" style="left:709px;top:282px;width:7px;height:58px;background:repeating-linear-gradient(#d8a838 0,#f0cc60 3px,#a87818 6px,#d8a838 9px);border-left:1px solid #6a5a2a;border-right:1px solid #5a3a10;box-sizing:border-box"></div>
<div class="a" style="left:815px;top:282px;width:7px;height:58px;background:repeating-linear-gradient(#d8a838 0,#f0cc60 3px,#a87818 6px,#d8a838 9px);border-left:1px solid #5a3a10;border-right:1px solid #6a5a2a;box-sizing:border-box"></div>
<div class="t" style="left:716px;top:297px;width:99px;text-align:center;font:bold 21.500px/26px 'Liberation Sans',sans-serif;color:#f6d85a;text-shadow:0 1px 0 #c89018,0 2px 2px #400">ИГРАТЬ</div>

<!-- icon boxes -->
<div class="a ibox" style="left:403px"></div>
<svg class="a" style="left:405px;top:382px" width="60" height="60" viewBox="3 1 56 58"><defs><linearGradient id="bk" x1="0" y1="0" x2="1" y2="1"><stop offset="0" stop-color="#8a6236"/><stop offset=".5" stop-color="#6b4a26"/><stop offset="1" stop-color="#4e3418"/></linearGradient></defs>
<path d="M10 8L38 3L55 40L22 50Z" fill="url(#bk)" stroke="#3a2410" stroke-width="1"/><path d="M10 8L5 12L17 54L22 50Z" fill="#b07a30" stroke="#6a4416" stroke-width="1"/><path d="M22 50L17 54L50 46L55 40Z" fill="#d8b878" stroke="#8a6a36" stroke-width="1"/><path d="M7 19L11.500 17.500M9 27L14 25.500M11.500 36L16 34.500M14 44L18.500 42.500" stroke="#e0a848" stroke-width="2"/>
<circle cx="32" cy="24" r="9" fill="none" stroke="#e6d8c0" stroke-width="2.400"/><text x="32" y="28.500" text-anchor="middle" font-family="Liberation Sans, sans-serif" font-weight="bold" font-size="13" fill="#e6d8c0">A</text><path d="M39 30L43 32" stroke="#e6d8c0" stroke-width="2.400"/>
<path d="M19 52V58L21 56L23 58V51ZM32 49V54L34 52L36 54V48Z" fill="#d03020"/></svg>
<div class="a ibox" style="left:559px"></div>
<svg class="a" style="left:561px;top:382px" width="60" height="60" viewBox="0 0 60 60"><path d="M4 20L12 22L8 12L18 16L22 6L28 14L38 4L40 14L52 8L48 20L58 22L50 30L56 42L46 40L44 54L36 48L26 58L24 48L10 52L14 40L2 38L10 30Z" fill="#f05a14"/><path d="M8 24L14 26M48 12L44 18M50 36L44 34M16 46L20 40M38 8L36 14" stroke="#fff" stroke-width="1.500"/><rect x="14" y="11" width="33" height="40" rx="11" fill="#fff"/><rect x="23" y="22" width="11" height="5" rx="2.500" fill="#f05a14"/><rect x="23" y="35" width="16" height="5" rx="2.500" fill="#f05a14"/></svg>
<div class="a ibox" style="left:715px"></div>
<svg class="a" style="left:717px;top:382px" width="60" height="60" viewBox="1 1 57 57"><defs><linearGradient id="wl" x1="0" y1="0" x2="0" y2="1"><stop offset="0" stop-color="#9a5638"/><stop offset="1" stop-color="#5e2e1a"/></linearGradient><linearGradient id="cn" x1="0" y1="0" x2="1" y2="0"><stop offset="0" stop-color="#c8961a"/><stop offset=".5" stop-color="#f8dc6a"/><stop offset="1" stop-color="#c8961a"/></linearGradient></defs>
<path d="M12 5L40 2L42 14H12Z" fill="#a8c4dc" stroke="#7a94ac" stroke-width=".8"/><path d="M16 8L44 6L45 16H16Z" fill="#c8d8c0" stroke="#8a9a84" stroke-width=".8"/>
<rect x="8" y="12" width="46" height="40" rx="5" fill="url(#wl)" stroke="#3e1c0e" stroke-width="1"/><path d="M8 26H54" stroke="#4a2412" stroke-width="1" opacity=".5"/><rect x="44" y="26" width="12" height="9" rx="3" fill="#7a4228" stroke="#3e1c0e" stroke-width=".8"/><circle cx="49" cy="30.500" r="2.600" fill="#e8c040" stroke="#8a6a10" stroke-width=".6"/>
<g stroke="#9a7210" stroke-width=".6"><ellipse cx="24" cy="50" rx="9" ry="3.500" fill="url(#cn)"/><ellipse cx="24" cy="46.500" rx="9" ry="3.500" fill="url(#cn)"/><ellipse cx="24" cy="43" rx="9" ry="3.500" fill="url(#cn)"/><ellipse cx="24" cy="39.500" rx="9" ry="3.500" fill="url(#cn)"/><ellipse cx="24" cy="36" rx="9" ry="3.500" fill="#f8e27a"/><ellipse cx="9" cy="54" rx="8" ry="3.200" fill="url(#cn)"/><ellipse cx="9" cy="51" rx="8" ry="3.200" fill="url(#cn)"/><ellipse cx="9" cy="48" rx="8" ry="3.200" fill="#f8e27a"/></g></svg>
<div class="t" style="left:385px;top:445px;width:94px;text-align:center;font-size:12.400px;line-height:16px;font-family:'DejaVu Serif',serif">Главная</div>
<div class="t" style="left:541px;top:445px;width:94px;text-align:center;font-size:12.400px;line-height:16px;font-family:'DejaVu Serif',serif;letter-spacing:-.3px">О Блоге</div>
<div class="t" style="left:698px;top:445px;width:94px;text-align:center;font-size:12.400px;line-height:16px;font-family:'DejaVu Serif',serif;white-space:normal">Личный<br>опыт</div>
<svg class="a" style="left:432px;top:460px" width="72" height="24"><g fill="#f4f3ee" stroke="#c4c4c0" stroke-width="1"><path d="M6 16C2 16 2 11 6 10.500C6 6 12 4 15 7.500C18 3 26 4 26 9C31 8 34 11 33 14C34 18 28 19 26 17.500C22 21 14 21 12 18C10 20 6 19 6 16Z"/><path d="M51 14C48 14 48 10 51.500 10C52 7 56 6.500 57.500 8.500C60 6.500 64 8 63.500 11C66.500 11 67 15 64 15.500C61 17.500 57 17.500 55.500 16C54 17 51 16.500 51 14Z"/></g></svg>

<!-- orange tag -->
<svg class="a" style="left:300px;top:485px" width="46" height="36" viewBox="0 0 46 36"><defs><linearGradient id="tg" x1="0" y1="0" x2="0" y2="1"><stop offset="0" stop-color="#f8c838"/><stop offset=".5" stop-color="#eaa414"/><stop offset="1" stop-color="#d88c08"/></linearGradient></defs><path d="M3 4H33L42 17.500L33 31H3Z" fill="#000" opacity=".15" transform="translate(1,2)"/><path d="M3 3H33L42 17L33 31H3Z" fill="url(#tg)"/><path d="M4 6.500H31.500L38.500 17L31.500 27.500H4" fill="none" stroke="#f8e08a" stroke-width="1" stroke-dasharray="2 2"/><circle cx="32" cy="17" r="2" fill="#fff"/></svg>

<!-- comments line -->
<svg class="a" style="left:358px;top:519px" width="20" height="17"><path d="M2.500 14.500V3.500H7L8.500 5.500H14.500V7.500" fill="#f0efe8" stroke="#888" stroke-width="1"/><path d="M2.500 14.500L5 7.500H17.500L15 14.500Z" fill="#f6f5ef" stroke="#888" stroke-width="1"/></svg>
<div class="t" style="left:394px;top:522px;font:12.200px/15px 'Liberation Mono',monospace;color:#222">0 коммент.</div>

<!-- post title -->
<div class="t ser" style="left:427px;top:585px;font-size:23.600px;line-height:26px;color:#183a2c;white-space:normal;width:420px">Товары и предметы запрещенные к пересылке и ввозу</div>
<div class="a" style="left:355px;top:634px;width:479px;height:0;border-top:1px dashed #c2c2bc"></div>
<svg class="a" style="left:588px;top:628px" width="12" height="12"><path d="M6 .8L7.400 4.400L11.400 4.600L8.300 7L9.400 10.900L6 8.700L2.600 10.900L3.700 7L.6 4.600L4.600 4.400Z" fill="#555" stroke="#222" stroke-width=".8"/></svg>

<!-- post body -->
<div class="t bt" style="left:355px;top:659px;line-height:20px">Перечень товаров для личного пользования, запрещенных к ввозу и<br>(или) вывозу, пересылке в международных почтовых<br>отправлениях &nbsp;&nbsp;,а так же список товаров для личного<br>пользования,ограниченные к ввозу и вывозу на территорию<br>таможенного союза.<br><br>1.Список предметов, запрещенных к пересылке:</div>
<!--C1-END-->
<!-- social bar -->
<div class="a soc" style="top:311px;background:linear-gradient(#5d83b0,#3f6590)"></div>
<div class="t" style="left:271px;top:316px;width:30px;text-align:center;font:bold 21px/21px 'Liberation Sans',sans-serif;color:#fff">B</div>
<div class="a soc" style="top:346px;background:linear-gradient(#4a64a8,#304a88)"></div>
<div class="t" style="left:275px;top:349px;width:30px;text-align:center;font:bold 28px/28px 'Liberation Sans',sans-serif;color:#fff">f</div>
<div class="a soc" style="top:381px;background:linear-gradient(#f8a030,#ee7e10)"></div>
<svg class="a" style="left:271px;top:381px" width="30" height="30"><circle cx="15" cy="10" r="3.200" fill="none" stroke="#fff" stroke-width="2.200"/><path d="M9.500 15.500C13 18.500 17 18.500 20.500 15.500M15 18V20L10.500 24.500M15 20L19.500 24.500" fill="none" stroke="#fff" stroke-width="2.300" stroke-linecap="round"/></svg>
<div class="a soc" style="top:416px;background:linear-gradient(#38b8f0,#1a98dc)"></div>
<svg class="a" style="left:271px;top:416px" width="30" height="30"><path d="M6 20.500C9 21 11.500 20 13 18.500C10.500 18.500 9.500 17 9 15.500C10 15.700 10.600 15.600 11.200 15.400C8.800 14.800 7.500 12.800 7.600 11C8.300 11.400 9 11.600 9.800 11.600C7.800 10 7.300 7.400 8.500 5.500C11 8.500 14 10 17.500 10.200C16.800 7 19.500 4.500 22.300 5C23.300 5.200 24 5.700 24.600 6.300C25.600 6.100 26.500 5.800 27.300 5.300C27 6.300 26.300 7.200 25.400 7.700C26.200 7.600 27 7.400 27.800 7C27.200 7.900 26.500 8.600 25.700 9.200C26 16 20.500 23.500 12.500 23.500C10 23.500 7.800 22.700 6 21.500Z" fill="#e8f6ff" transform="translate(-1.500,1.500) scale(.97)"/></svg>
<div class="a soc" style="top:451px;background:linear-gradient(#d85030,#b43818)"></div>
<div class="t" style="left:277px;top:450px;font:23px/26px 'Liberation Serif',serif;color:#fff">g</div>
<div class="t" style="left:289px;top:452px;font:bold 13px/14px 'Liberation Sans',sans-serif;color:#fff">+</div>
<div class="a soc" style="top:486px;background:linear-gradient(#f02030,#d81020)"></div>
<svg class="a" style="left:271px;top:486px" width="30" height="30"><circle cx="19" cy="6" r="2.600" fill="#fff"/><path d="M20 10L15 13L11.500 9.500M15 13V17L10.500 25M13 17H17.500L15.500 25M10 14.500H13" fill="none" stroke="#fff" stroke-width="2.200" stroke-linecap="round" stroke-linejoin="round"/></svg>
<div class="a soc" style="top:521px;background:linear-gradient(#3f7cc0,#245a9c)"></div>
<div class="t" style="left:271px;top:523px;width:30px;text-align:center;font:24px/24px 'Liberation Sans',sans-serif;color:#fff">@</div>
<div class="a soc" style="top:556px;background:linear-gradient(#7aaade,#5a8ac4)"></div>
<svg class="a" style="left:271px;top:556px" width="30" height="30"><path d="M8 7L11.500 4.500L22.500 19L23.500 25L18 22.500Z M18 22.500L22.500 19" fill="none" stroke="#e4f0fc" stroke-width="1.600" stroke-linejoin="round"/><path d="M10 9.500L13.500 7" stroke="#e4f0fc" stroke-width="1.300"/></svg>
<div class="a soc" style="top:591px;background:linear-gradient(#f89030,#ee6e10)"></div>
<div class="a" style="left:277px;top:596px;width:19px;height:20px;border-radius:7px;background:#fde8d4"></div>
<div class="a" style="left:282px;top:602px;width:6px;height:3px;border-radius:1.500px;background:#f07a1c"></div>
<div class="a" style="left:282px;top:609px;width:9px;height:3px;border-radius:1.500px;background:#f07a1c"></div>
<div class="a" style="left:271px;top:626px;width:30px;height:30px;border-radius:50%;background:linear-gradient(#ea6a52,#d84c34);box-shadow:0 1px 1px rgba(0,0,0,.3)"></div>
<div class="a" style="left:277px;top:639px;width:18px;height:4px;background:#fff;border-radius:1px"></div>
<div class="a" style="left:284px;top:632px;width:4px;height:18px;background:#fff;border-radius:1px"></div>
<div class="a" style="left:273px;top:661px;width:24px;height:26px;background:#eeeeee;border-radius:2px"></div>
<div class="t" style="left:273px;top:668px;width:24px;text-align:center;font:11px/12px 'Liberation Sans',sans-serif;color:#666">8</div>
<!--C2-END-->
<!-- right column -->
<div class="t ser" style="left:926px;top:380px;font-size:15px;line-height:18px;letter-spacing:-.9px;color:#1a1a1a">Увеличение текста в блоге!</div>
<div class="a" style="left:926px;top:407px;width:210px;height:0;border-top:1px dashed #bdbdb8"></div>
<div class="a" style="left:946px;top:420px;width:184px;height:60px;box-sizing:border-box;border:2px solid #222;border-bottom:none;background:#f3f1e8;overflow:hidden">
 <div class="a" style="left:15px;top:4px;width:150px;height:150px;border-radius:50%;background:#0c0c0c;box-shadow:0 0 3px #000"></div>
 <div class="a" style="left:20px;top:9px;width:140px;height:140px;border-radius:50%;background:#3a3a3a"></div>
 <div class="a" style="left:23px;top:12px;width:134px;height:134px;border-radius:50%;background:#0a0a0a"></div>
 <div class="a" style="left:29px;top:18px;width:122px;height:122px;border-radius:50%;background:radial-gradient(circle at 50% 25%,#8e8b72 0,#6e6c5a 40%,#4a4a40 100%)"></div>
 <div class="a" style="left:160px;top:3px;width:17px;height:17px;box-sizing:border-box;border:2px solid #222;background:#f3f1e8"></div>
 <svg class="a" style="left:163px;top:6px" width="11" height="11"><path d="M1.500 1.500L9.500 9.500M9.500 1.500L1.500 9.500" stroke="#222" stroke-width="3"/></svg>
</div>
<div class="t" style="left:928px;top:442px;font:10px/10px 'Liberation Sans',sans-serif;color:#222">+</div>
<div class="t" style="left:942px;top:440px;font:13px/13px 'Liberation Sans',sans-serif;color:#222">+</div>
<div class="t" style="left:957px;top:438px;font:15px/15px 'Liberation Sans',sans-serif;color:#222">+</div>
<div class="t" style="left:975px;top:435px;font:18px/18px 'Liberation Sans',sans-serif;color:#222">+</div>
<div class="a nav" style="top:458px">Навигация</div>
<div class="a nav" style="top:490px;background:#d6d6d6;color:#808080">Главная страница</div>
<div class="a nav" style="top:522px">Почта</div>
<div class="a nav" style="top:554px">Интернет магазины</div>
<div class="a nav" style="top:586px">Полезное</div>
<div class="a nav" style="top:618px;height:33px">Возможные проблемы</div>
<div class="a badge" style="top:531px">3</div>
<div class="a badge" style="top:563px">1</div>
<div class="a badge" style="top:595px">5</div>
<div class="a badge" style="top:627px">4</div>

<!-- ad 1: reborn -->
<div class="a" style="left:930px;top:656px;width:100px;height:100px;overflow:hidden;background:#e68a1e">
 <svg class="a" style="left:0;top:0" width="100" height="100" viewBox="0 0 100 100">
  <path d="M40 26L62 14L78 20L100 10V60H50Z" fill="#c9761a"/>
  <path d="M0 24L10 20L20 26L24 40L30 52L26 70L34 84L30 100H0Z" fill="#4a4240"/>
  <path d="M4 30L14 27L18 36L10 42Z M8 50L22 46L24 60L12 66Z M2 74L16 70L22 88L6 96Z" fill="#8a8886"/>
  <path d="M10 34L20 32L22 44L14 48Z M14 58L24 62L20 72Z" fill="#a82a20"/>
  <path d="M0 56L36 72L34 78L0 64Z" fill="#6a6a6a"/><path d="M18 52L40 74" stroke="#9a9896" stroke-width="4"/>
  <path d="M44 60C46 48 58 42 70 44C84 40 100 46 100 56V100H40C38 88 40 72 44 60Z" fill="#8a4e44"/>
  <path d="M70 50C82 46 96 50 100 58V100H76C70 84 66 66 70 50Z" fill="#b87866"/>
  <path d="M46 58C50 52 58 52 62 58L60 76C54 80 48 76 46 70Z" fill="#5a3430"/>
  <path d="M44 40C40 48 40 56 46 60L50 56C46 52 46 46 48 42Z" fill="#f4f0ec"/>
  <path d="M60 44C72 36 88 38 96 44L92 48C84 44 72 44 64 50Z" fill="#f4f0ec"/>
  <circle cx="80" cy="56" r="4" fill="#e8e0d8"/><path d="M74 64H88V70H74Z" fill="#3a3030"/>
  <path d="M84 24L90 20L96 26L92 30Z" fill="#2a1a10"/>
 </svg>
 <div class="t" style="left:15px;top:0;font:bold 21px/24px 'Liberation Serif',serif;color:#140c04;letter-spacing:-.3px">R<span style="font-size:16px">EBORN</span></div>
 <div class="a" style="left:31px;top:26px;width:66px;height:12px;background:#fff"></div>
 <svg class="a" style="left:60px;top:37px" width="12" height="8"><path d="M1 0H9L3 7Z" fill="#fff"/></svg>
 <div class="t" style="left:33px;top:28px;font:bold 7px/9px 'Liberation Serif',serif;color:#333;letter-spacing:-.1px">Давай ты попробуй</div>
 <div class="a" style="left:8px;top:75px;width:84px;height:22px;border-radius:11px;background:linear-gradient(#62b030,#3a8a18 50%,#226210);box-shadow:0 1px 2px rgba(0,0,0,.5)"></div>
 <div class="t" style="left:8px;top:76px;width:84px;text-align:center;font:bold 16px/20px 'Liberation Serif',serif;color:#fff">Играй!</div>
</div>
<!-- ad 2 -->
<div class="a" style="left:1040px;top:656px;width:100px;height:100px;overflow:hidden;background:#3a2412">
 <div class="a" style="left:-20px;top:-10px;width:110px;height:110px;background:radial-gradient(ellipse at 42% 52%,#eca838 0,#c87418 28%,#7a4012 55%,rgba(58,36,18,0) 78%)"></div>
 <svg class="a" style="left:0;top:0" width="100" height="100" viewBox="0 0 100 100">
  <path d="M52 12C58 2 74 2 76 14L78 30L96 24L100 40V74L84 80L72 100H50L56 70L48 50Z" fill="#3a2e26"/>
  <path d="M56 30L72 28L76 60L70 84L56 86L52 60Z" fill="#c8a070"/>
  <path d="M54 56L74 52L76 70L56 74Z" fill="#8a5a2a"/>
  <ellipse cx="66" cy="14" rx="7" ry="9" fill="#e0b896"/><path d="M56 8C60 0 74 0 76 10L70 8L60 10Z" fill="#7a3a1a"/>
  <path d="M70 26L96 22L100 60L82 56Z" fill="#2a221c"/>
  <path d="M0 86L50 50L52 54L2 90Z" fill="#c8c0b0"/>
  <circle cx="24" cy="26" r="17" fill="none" stroke="#e8b828" stroke-width="3.500"/><circle cx="24" cy="26" r="14" fill="#7a1c0c" opacity=".75"/>
 </svg>
 <div class="t" style="left:12px;top:6px;font:italic bold 36px/40px 'Liberation Sans',sans-serif;color:#f4c838;text-shadow:0 0 2px #a03808">7</div>
 <div class="t" style="left:29px;top:17px;font:italic bold 7px/7.500px 'Liberation Sans',sans-serif;color:#f0e8d8;text-shadow:0 0 1px #000">&nbsp;СЕДЬМОЙ<br>ЭЛЕМЕНТ</div>
 <div class="a" style="left:13px;top:71px;width:75px;height:17px;border-radius:3px;background:linear-gradient(#eeae3a,#d08414 50%,#b06408);box-shadow:0 1px 2px rgba(0,0,0,.6)"></div>
 <div class="t" style="left:13px;top:73px;width:75px;text-align:center;font:bold 11px/13px 'Liberation Sans',sans-serif;color:#f6eedc;letter-spacing:.4px">ИГРАТЬ</div>
 <div class="t" style="left:44px;top:91px;font:7px/8px 'Liberation Sans',sans-serif;color:#b8b0a0">zzima.com</div>
 <svg class="a" style="left:33px;top:90px" width="9" height="9"><path d="M1 2H8L1 7H8M4.500 0V9" stroke="#d8d0c0" stroke-width="1.200" fill="none"/></svg>
</div>
<!-- ad 3 -->
<div class="a" style="left:930px;top:769px;width:100px;height:100px;overflow:hidden;background:linear-gradient(#a8689a 0,#c088aa 10px,#b47aa0 24px)">
 <svg class="a" style="left:0;top:0" width="100" height="30" viewBox="0 0 100 30"><path d="M56 4C58 0 66 0 68 4L70 14L78 18L92 22V30H34V22L48 18L54 14Z" fill="#5a5858"/><path d="M58 5C60 2 64 2 66 5L66 14H58Z" fill="#c8c4c0"/><path d="M60 10H64V20H60Z" fill="#c84a2a"/><circle cx="57" cy="16" r="1.300" fill="#6af0a0"/><circle cx="67" cy="16" r="1.300" fill="#6af0a0"/></svg>
</div>
<!-- ad 4 -->
<div class="a" style="left:1040px;top:769px;width:100px;height:100px;overflow:hidden;background:linear-gradient(100deg,#7a5a2e 0,#a88a5a 10%,#e8dcc6 24%,#f2e8d6 40%,#e4d0ac 100%)">
 <svg class="a" style="left:0;top:0" width="100" height="30" viewBox="0 0 100 30"><path d="M4 6C10 2 20 4 22 10C24 16 18 20 24 24L20 30H0V8Z" fill="#5a4a3a"/><path d="M8 10C12 8 16 10 16 14C16 18 12 18 14 22" fill="none" stroke="#d8d0c0" stroke-width="2"/><path d="M40 30C40 14 52 4 68 4C84 4 94 14 96 30Z" fill="#2c1e1a"/><path d="M26 0L40 0L34 16Z M70 0H96L92 8Z" fill="#d8b890" opacity=".8"/></svg>
</div>

<!-- shade at far right (scroll boundary) -->
<!--C3-END-->
<!--PAGE-END-->
</div></div>

<!-- scrollbars -->
<div class="a" style="left:1133px;top:116px;width:17px;height:676px;background:#f4f4f4;border-left:1px solid #e2e2e2;box-sizing:border-box"></div>
<div class="a sbtn" style="left:1134px;top:117px;width:16px;height:17px"></div>
<svg class="a" style="left:1137px;top:122px" width="10" height="8"><path d="M1.500 6L5 2.500L8.500 6" fill="none" stroke="#4a5870" stroke-width="2"/></svg>
<div class="a sbtn" style="left:1134px;top:134px;width:16px;height:215px"></div>
<div class="a" style="left:1138px;top:237px;width:8px;height:1px;background:#8a93a8;box-shadow:0 2px 0 #8a93a8,0 4px 0 #8a93a8,0 6px 0 #8a93a8"></div>
<div class="a sbtn" style="left:1134px;top:775px;width:16px;height:17px"></div>
<svg class="a" style="left:1137px;top:780px" width="10" height="8"><path d="M1.500 2L5 5.500L8.500 2" fill="none" stroke="#4a5870" stroke-width="2"/></svg>
<div class="a" style="left:268px;top:792px;width:865px;height:17px;background:#f4f4f4;border-top:1px solid #e2e2e2;box-sizing:border-box"></div>
<div class="a sbtn" style="left:268px;top:793px;width:16px;height:16px;background:linear-gradient(#fff,#ececf0 50%,#d6d6de)"></div>
<svg class="a" style="left:272px;top:796px" width="8" height="10"><path d="M6 1.500L2.500 5L6 8.500" fill="none" stroke="#4a5870" stroke-width="2"/></svg>
<div class="a sbtn" style="left:285px;top:793px;width:774px;height:16px;background:linear-gradient(#fff,#ececf0 50%,#d4d4dc)"></div>
<div class="a" style="left:668px;top:797px;width:1px;height:8px;background:#8a93a8;box-shadow:2px 0 0 #8a93a8,4px 0 0 #8a93a8,6px 0 0 #8a93a8"></div>
<div class="a sbtn" style="left:1115px;top:793px;width:17px;height:16px;background:linear-gradient(#fff,#ececf0 50%,#d6d6de)"></div>
<svg class="a" style="left:1120px;top:796px" width="8" height="10"><path d="M2 1.500L5.500 5L2 8.500" fill="none" stroke="#4a5870" stroke-width="2"/></svg>
<div class="a" style="left:1133px;top:792px;width:17px;height:17px;background:#edede8"></div>
<div class="a" style="left:1150px;top:112px;width:2px;height:697px;background:#edede8"></div>
<div class="a" id="statusbar"></div>
<svg class="a" style="left:267px;top:815px" width="17" height="16"><path d="M1.500 .5H12L15.500 4V15.500H1.500Z" fill="#fff" stroke="#aaa" stroke-width="1"/><path d="M7.500 3.500L13.500 14H1.500Z" fill="#ffd83a" stroke="#8a6d00" stroke-width="1"/><path d="M7.500 7V10.500M7.500 11.700V13" stroke="#000" stroke-width="1.500"/></svg>
<div class="t" style="left:286px;top:816px;font-size:10.600px">Выполнено, но с ошибками на странице.</div>
<div class="a sdiv" style="left:655px"></div><div class="a sdiv" style="left:678px"></div><div class="a sdiv" style="left:702px"></div><div class="a sdiv" style="left:726px"></div><div class="a sdiv" style="left:750px"></div><div class="a sdiv" style="left:774px"></div><div class="a sdiv" style="left:798px"></div>
<svg class="a" style="left:733px;top:814px" width="18" height="18"><path d="M3 7C6 2.500 13 2.500 16.500 7C13 11 6 11 3 7Z" fill="#fff" stroke="#555" stroke-width="1.200"/><circle cx="10" cy="6.800" r="2.200" fill="#444"/><circle cx="6" cy="11.500" r="4.300" fill="#fff" stroke="#d92a2a" stroke-width="1.700"/><path d="M3 8.500L9 14.500" stroke="#d92a2a" stroke-width="1.700"/></svg>
<svg class="a" style="left:803px;top:814px" width="18" height="18"><defs><radialGradient id="glb" cx=".35" cy=".3" r=".8"><stop offset="0" stop-color="#8fd0ff"/><stop offset=".6" stop-color="#2a76d8"/><stop offset="1" stop-color="#123f98"/></radialGradient></defs><circle cx="9" cy="9" r="8" fill="url(#glb)"/><path d="M4 5C6 3 9 3.500 9.500 5.500C10 7.500 7 8 6.500 10C6 12 4 11 3 9.500C2.500 8 3 6 4 5Z M11 8.500C13 7.500 15.500 9 15 11C14.500 13 12.500 14.500 11.500 13C10.500 11.500 10 9.500 11 8.500Z" fill="#4fbf3a"/></svg>
<div class="t" style="left:823px;top:816px;font-size:10.600px">Интернет</div>
<div class="a" style="left:861px;top:812px;width:291px;height:21px;background:#000"></div>
<svg class="a" style="left:869px;top:816px" width="13" height="13"><rect x="4.500" y="1.500" width="7" height="7" fill="none" stroke="#fff" stroke-width="1.300"/><rect x="1.500" y="4.500" width="7" height="7" fill="#000" stroke="#fff" stroke-width="1.300"/></svg>
<svg class="a" style="left:1087px;top:819px" width="13" height="8"><path d="M0 0H13L6.500 7.500Z" fill="#fff"/></svg>
<svg class="a" style="left:1107px;top:815px" width="18" height="15"><path d="M1 4H5L6.500 2H11.500L13 4H17V14H1Z" fill="#fff"/><circle cx="9" cy="9" r="3.200" fill="#000"/><circle cx="9" cy="9" r="1.800" fill="#fff"/></svg>
<div class="a" style="left:1131px;top:817px;width:11px;height:11px;border-radius:50%;background:#d81818"></div>
<div class="t" style="left:1144px;top:815px;font-size:12px;color:#fff;font-weight:bold">R</div>

<div class="a" id="taskbar"></div>
<div class="a" style="left:0;top:834px;width:87px;height:30px;border-radius:0 14px 14px 0/0 18px 18px 0;background:linear-gradient(#7a3a10 0,#f6a868 1px,#ee8a44 6px,#e87830 14px,#cc5c16 15px,#bc500e 22px,#a84408 30px);box-shadow:1px 0 2px #000"></div>
<svg class="a" style="left:9px;top:840px" width="18" height="18"><path d="M4 2.500C5.500 1.500 7 1.800 8.500 2.800L7.300 7.500C5.800 6.600 4.300 6.500 2.800 7.300Z" fill="#e8502a"/><path d="M9.500 3.300C11 4.200 12.800 4.200 14.800 3L13.600 7.700C11.800 8.800 10 8.600 8.300 7.800Z" fill="#6cc04a"/><path d="M2.500 8.300C4 7.500 5.500 7.800 7 8.700L5.800 13.300C4.300 12.400 2.800 12.300 1.300 13Z" fill="#3a8ae8"/><path d="M8 9C9.700 9.800 11.500 9.800 13.300 8.700L12.100 13.400C10.300 14.400 8.500 14.300 6.800 13.600Z" fill="#f8c82a"/></svg>
<div class="t" style="left:26px;top:838px;font-family:'Liberation Sans',sans-serif;font-size:19px;line-height:20px;font-weight:bold;font-style:italic;color:#fff;text-shadow:1px 1px 1px #4a1800;transform:scaleX(.86);transform-origin:0 0">пуск</div>
<div class="a tbtn" style="left:98px;width:157px"></div>
<svg class="a" style="left:106px;top:842px" width="16" height="16"><defs><radialGradient id="ffg" cx=".5" cy=".4" r=".6"><stop offset="0" stop-color="#ffd23a"/><stop offset=".6" stop-color="#f07a18"/><stop offset="1" stop-color="#d84a10"/></radialGradient></defs><circle cx="8" cy="8" r="7.500" fill="url(#ffg)"/><circle cx="8.800" cy="7" r="4" fill="#3a5fc0"/><path d="M2 5C4 6 5 9 8 10C11 11 12 8 11 6.500C13 8 12.500 12 9 13C5 14 1.500 11 2 5Z" fill="#f08a1c"/></svg>
<div class="t" style="left:125px;top:843px;color:#fff;font-size:10.800px">Безымянный.jpg - G...</div>
<div class="a tbtn" style="left:258px;width:157px"></div>
<svg class="a" style="left:265px;top:840px" width="18" height="18"><use href="#ie"/></svg>
<div class="t" style="left:285px;top:843px;color:#fff;font-size:10.800px">Покупки в Китае - ...</div>
<div class="a" style="left:1018px;top:844px;width:16px;height:13px;background:#d8d8d8"></div>
<div class="t" style="left:1019px;top:844px;font-size:10px;line-height:13px;color:#000">EN</div>
<div class="a" style="left:1042px;top:843px;width:12px;height:13px;background:#ffffc8;border:1px solid #666;box-sizing:border-box"></div>
<div class="t" style="left:1045px;top:843px;font-size:10px;line-height:13px;color:#1a1ad0;font-weight:bold">?</div>
<div class="a" style="left:1076px;top:836px;width:1px;height:28px;background:#222"></div>
<div class="a" style="left:1077px;top:843px;width:13px;height:13px;border-radius:50%;background:#555;border:1px solid #777;box-sizing:border-box"></div>
<svg class="a" style="left:1080px;top:846px" width="6" height="8"><path d="M4.500 1L1.500 4L4.500 7" fill="none" stroke="#ccc" stroke-width="1.300"/></svg>
<div class="a" style="left:1090px;top:842px;width:15px;height:15px;border-radius:50%;background:radial-gradient(circle at 50% 45%,#3cf03c 0,#18c818 45%,#0a7a0a 60%,#ddd 66%,#888 100%)"></div>
<div class="t" style="left:1110px;top:843px;color:#fff;font-size:10.800px">11:43</div>
</div>
</body>
</html>
